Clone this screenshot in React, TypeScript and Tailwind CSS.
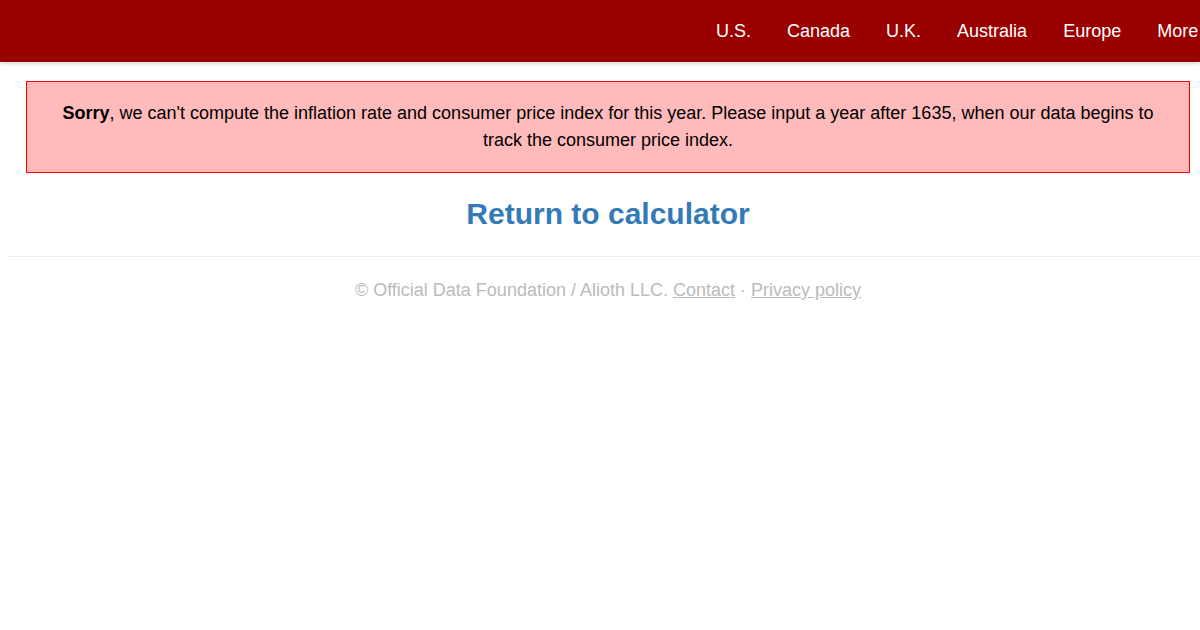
const navItems = ['U.S.', 'Canada', 'U.K.', 'Australia', 'Europe', 'More'];

export default function App() {
  return (
    <div className="min-h-[630px] w-[1200px] overflow-hidden bg-white font-['Liberation_Sans',Arial,sans-serif] text-[18px] text-black">
      <header className="flex h-[62px] items-center overflow-hidden whitespace-nowrap bg-[#990000] pl-[698px] shadow-[0_2px_4px_rgba(0,0,0,0.15)]">
        {navItems.map((item) => (
          <a key={item} className="shrink-0 px-[18px] text-[18px] leading-[62px] text-white">
            {item}
          </a>
        ))}
      </header>

      <main className="ml-2 w-[1200px]">
        <div className="mx-[18px] mt-[19px] border border-[#ff0000] bg-[#ffbbbb] px-[30px] pt-[18px] pb-[18px] text-center leading-[27px]">
          <b>Sorry</b>, we can't compute the inflation rate and consumer price index for this year. Please input a year after 1635,
          when our data begins to track the consumer price index.
        </div>

        <h2 className="mt-[21px] text-center text-[30px] font-bold leading-[40px] text-[#337ab7]">
          Return to calculator
        </h2>

        <hr className="mt-[22px] border-t border-[#eeeeee]" />

        <footer className="mt-[21px] text-center leading-[24px] text-[#bbbbbb]">
          © Official Data Foundation / Alioth LLC. <a className="underline">Contact</a> ·{' '}
          <a className="underline">Privacy policy</a>
        </footer>
      </main>
    </div>
  );
}
